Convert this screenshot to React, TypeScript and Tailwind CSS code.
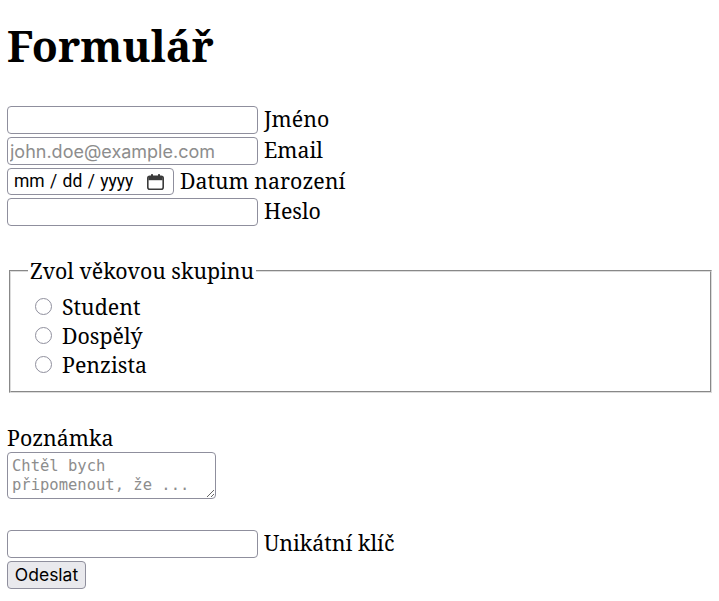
import React from "react";

const serif = "font-['Noto_Serif','DejaVu_Serif',serif]";

function CalendarIcon() {
  return (
    <svg width="19" height="18" viewBox="0 0 19 18" fill="none">
      <rect x="1.8" y="3.3" width="15.4" height="13" rx="2" stroke="#3b3b3b" strokeWidth="1.6" />
      <rect x="2.4" y="3.8" width="14.2" height="3.4" fill="#3b3b3b" />
      <rect x="5" y="1" width="2" height="3.5" rx="0.7" fill="#3b3b3b" />
      <rect x="12" y="1" width="2" height="3.5" rx="0.7" fill="#3b3b3b" />
    </svg>
  );
}

const inputCls =
  "w-[251px] h-[28px] border border-[#8f8f9d] rounded-[4px] bg-white px-[2px] text-[18px] font-['Inter',sans-serif] text-black placeholder:text-[#8d8d8d] outline-none";

function TextRow({ label, placeholder, type = "text", mt }: { label: string; placeholder?: string; type?: string; mt: string }) {
  return (
    <div className={`flex items-center h-[28px] ${mt}`}>
      <input type={type} placeholder={placeholder} className={inputCls} />
      <span className="ml-[6px] text-[21.33px] leading-[29px] -mt-[3px]">{label}</span>
    </div>
  );
}

function Radio({ label }: { label: string }) {
  return (
    <div className="flex items-center h-[29px]">
      <span className="ml-[7px] w-[17px] h-[17px] rounded-full border border-[#8f8f9d] bg-white" />
      <span className="ml-[10px] text-[21.33px] leading-[29px]">{label}</span>
    </div>
  );
}

export default function App() {
  return (
    <div className={`${serif} text-black bg-white min-h-[601px] px-[7px]`}>
      <h1 className="mt-[17px] h-[58px] text-[42.67px] leading-[58px] font-bold">Formulář</h1>
      <div className="flex flex-col">
        <TextRow label="Jméno" mt="mt-[31px]" />
        <TextRow label="Email" placeholder="john.doe@example.com" type="email" mt="mt-[3px]" />
        <div className="flex items-center h-[27px] mt-[3px]">
          <div className="w-[167px] h-[27px] border border-[#8f8f9d] rounded-[4px] bg-white flex items-center pl-[6px] pr-[8px] justify-between font-['Roboto',sans-serif] text-[17.5px] text-black">
            <span className="[word-spacing:1px]">mm / dd / yyyy</span>
            <CalendarIcon />
          </div>
          <span className="ml-[6px] text-[21.33px] leading-[29px] -mt-[2px]">Datum narození</span>
        </div>
        <TextRow label="Heslo" type="password" mt="mt-[3px]" />
      </div>

      <fieldset className="mt-[30px] ml-[2px] border-2 [border-style:groove] border-[#dcdcdc] pl-[17px] pr-[17px] pt-[7px] pb-[12px]">
        <legend className="px-[2px] text-[21.33px] leading-[29px]">Zvol věkovou skupinu</legend>
        <Radio label="Student" />
        <Radio label="Dospělý" />
        <Radio label="Penzista" />
      </fieldset>

      <div className="mt-[30px] text-[21.33px] leading-[29px]">Poznámka</div>
      <textarea
        placeholder={"Chtěl bych\npřipomenout, že ..."}
        className="block w-[209px] h-[47px] border border-[#8f8f9d] rounded-[4px] px-[4px] pt-[4px] pb-[2px] font-['DejaVu_Sans_Mono',monospace] text-[15.5px] leading-[19px] placeholder:text-[#8d8d8d] outline-none resize"
      />

      <div className="flex items-center h-[28px] mt-[31px]">
        <input type="text" className={inputCls} />
        <span className="ml-[6px] text-[21.33px] leading-[29px] -mt-[3px]">Unikátní klíč</span>
      </div>
      <button className="mt-[3px] block w-[79px] h-[28px] border border-[#8f8f9d] rounded-[4px] bg-[#e9e9ed] font-['Inter',sans-serif] text-[17.5px] leading-[26px] text-black">
        Odeslat
      </button>
    </div>
  );
}
